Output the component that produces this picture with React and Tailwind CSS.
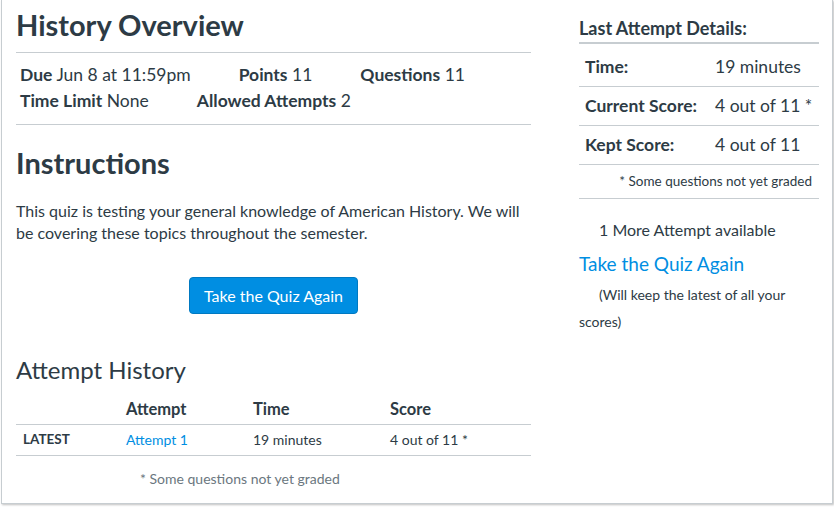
import React from 'react';

const details = [
  { label: 'Time:', value: '19 minutes' },
  { label: 'Current Score:', value: '4 out of 11 *' },
  { label: 'Kept Score:', value: '4 out of 11' },
];

const Meta = ({ label, value }) => (
  <span>
    <span className="font-bold">{label}</span> {value}
  </span>
);

export default function App() {
  return (
    <div className="w-[834px] h-[507px] bg-white font-['Lato',sans-serif] text-[#2d3b45]">
      <div className="ml-px w-[832px] h-[504px] border-x border-b border-[#c7cdd1] shadow-[1px_1px_2px_rgba(0,0,0,0.25)] flex">
        {/* Main column */}
        <div className="w-[515px] ml-[14px]">
          <div className="border-b border-[#c7cdd1] pt-[8px] pb-[10px]">
            <h1 className="text-[29px] leading-[34px] font-bold">History Overview</h1>
          </div>
          <div className="border-b border-[#c7cdd1] pt-[9px] pb-[10px] pl-[4px] text-[17.5px] leading-[26px]">
            <div className="flex gap-x-12">
              <Meta label="Due" value="Jun 8 at 11:59pm" />
              <Meta label="Points" value="11" />
              <Meta label="Questions" value="11" />
            </div>
            <div className="flex gap-x-12">
              <Meta label="Time Limit" value="None" />
              <Meta label="Allowed Attempts" value="2" />
            </div>
          </div>

          <h2 className="mt-[21px] text-[29px] leading-[34px] font-bold">Instructions</h2>
          <p className="mt-[20px] text-[16px] leading-[22px] pr-[10px]">
            This quiz is testing your general knowledge of American History. We will be covering these topics throughout the semester.
          </p>
          <div className="mt-[33px] flex justify-center">
            <button className="h-[37px] px-[14px] rounded-[4px] bg-[#008ee2] border border-[#0079c1] text-white text-[16px]">
              Take the Quiz Again
            </button>
          </div>

          <h2 className="mt-[41px] text-[24px] leading-[30px] font-normal">Attempt History</h2>
          <table className="mt-[10px] w-full border-collapse text-left">
            <thead>
              <tr className="border-b border-[#c7cdd1] h-[29px] text-[16.5px]">
                <th className="w-[103px]"></th>
                <th className="w-[127px] px-[7px] font-bold">Attempt</th>
                <th className="w-[137px] px-[7px] font-bold">Time</th>
                <th className="px-[7px] font-bold">Score</th>
              </tr>
            </thead>
            <tbody>
              <tr className="border-b border-[#c7cdd1] h-[31px] text-[14px]">
                <td className="px-[7px] text-[13.5px] font-bold">LATEST</td>
                <td className="px-[7px] text-[#008ee2]">Attempt 1</td>
                <td className="px-[7px]">19 minutes</td>
                <td className="px-[7px]">4 out of 11 *</td>
              </tr>
            </tbody>
          </table>
          <p className="mt-[14px] pl-[124px] text-[14px] leading-[18px] text-[#6b7780]">* Some questions not yet graded</p>
        </div>

        {/* Sidebar */}
        <div className="w-[240px] ml-[48px]">
          <div className="pt-[18px] pb-[3px] border-b-2 border-[#c7cdd1]">
            <h3 className="text-[18px] leading-[21px] font-bold">Last Attempt Details:</h3>
          </div>
          {details.map((d, i) => (
            <div
              key={d.label}
              className={`flex items-center border-b border-[#c7cdd1] text-[17.5px] px-[6px] ${i === 0 ? 'h-[43px] pt-[4px]' : 'h-[39px]'}`}
            >
              <span className="w-[130px] font-bold">{d.label}</span>
              <span>{d.value}</span>
            </div>
          ))}
          <div className="h-[34px] flex items-center justify-end pr-[7px] border-b border-[#c7cdd1] text-[13.5px]">
            * Some questions not yet graded
          </div>
          <p className="mt-[20px] indent-[20px] text-[16px] leading-[22px]">1 More Attempt available</p>
          <p className="mt-[10px] text-[19px] leading-[26px] text-[#008ee2]">Take the Quiz Again</p>
          <p className="mt-[4px] indent-[20px] text-[14px] leading-[27px]">(Will keep the latest of all your scores)</p>
        </div>
      </div>
    </div>
  );
}
